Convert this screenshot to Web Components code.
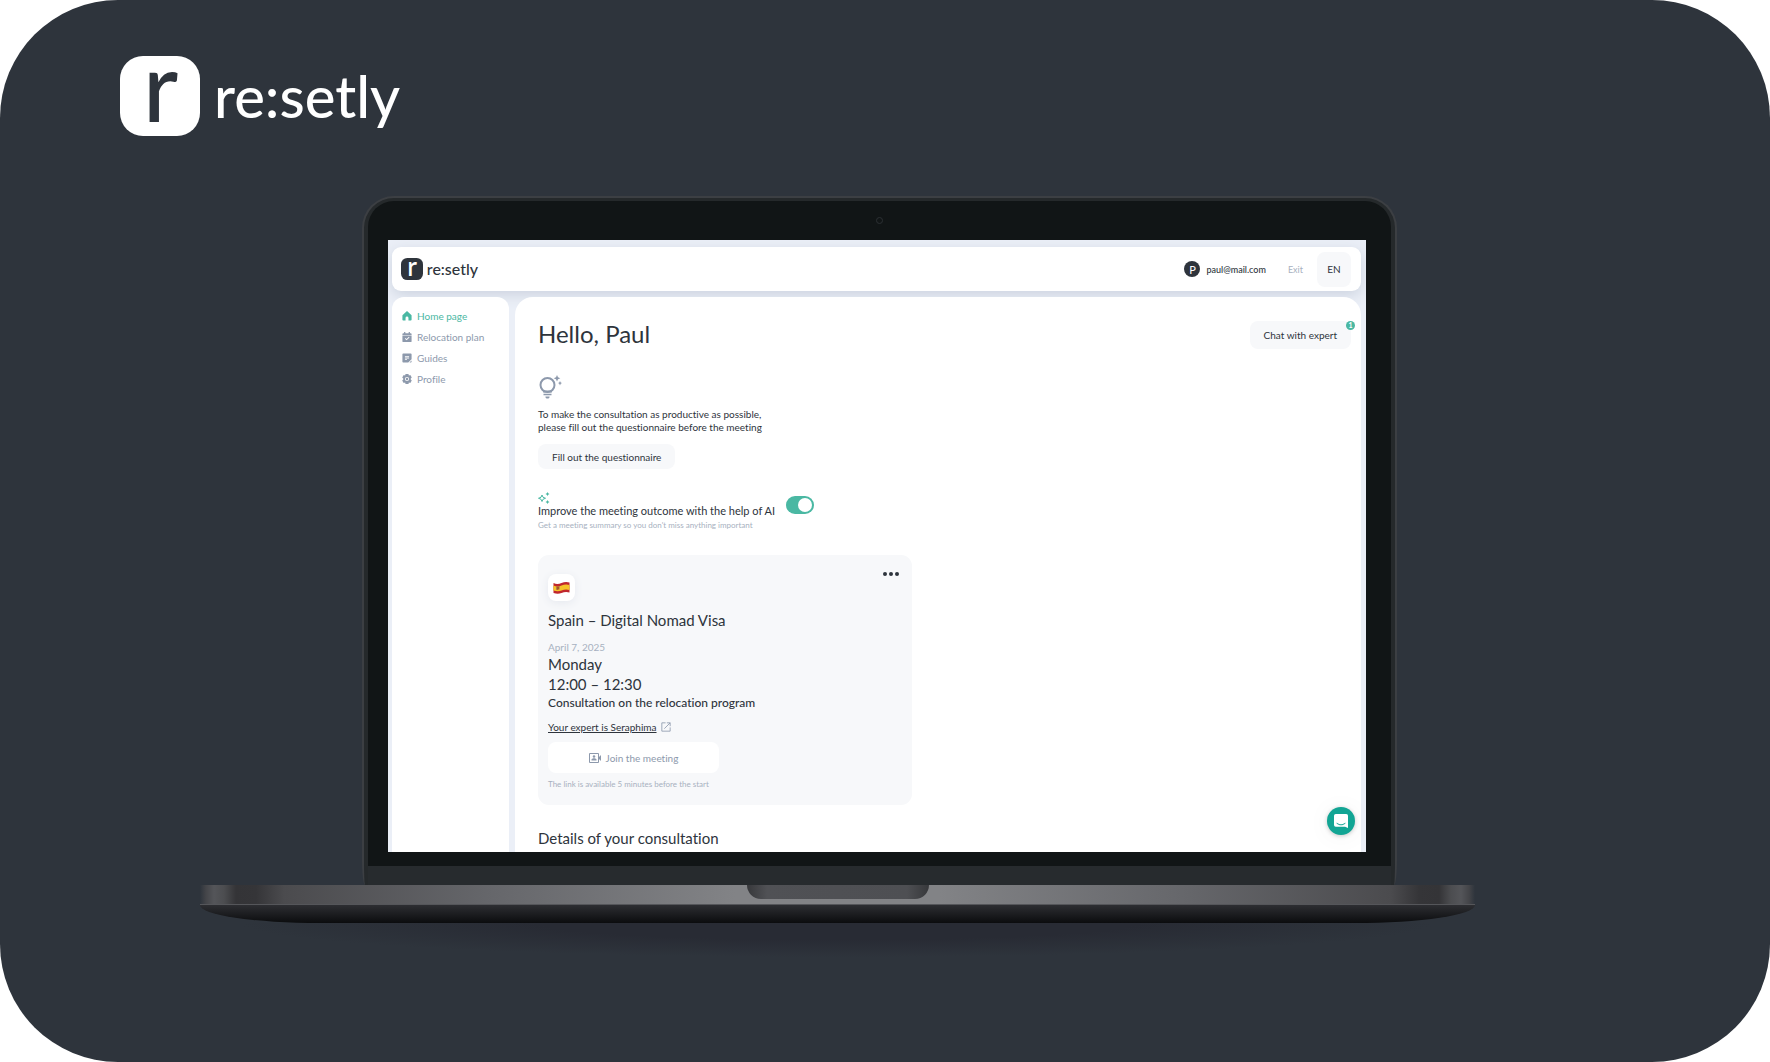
<!DOCTYPE html>
<html lang="en">
<head>
<meta charset="utf-8">
<meta name="viewport" content="width=device-width, initial-scale=1">
<title>re:setly</title>
<style>
  body {
    margin: 0;
    background: #fff;
    color: #2e343c;
    font-family: Lato, "Liberation Sans", sans-serif;
    font-variant-ligatures: none;
  }
</style>
</head>
<body>
<promo-stage>
  <resetly-logo slot="brand"></resetly-logo>
  <laptop-frame>
    <resetly-app></resetly-app>
  </laptop-frame>
</promo-stage>

<script>
//register a component from its css and html
const define = (name, css, html) => {
  customElements.define(name, class extends HTMLElement {
    constructor() {
      super();
      this.attachShadow({ mode: "open" }).innerHTML = `<style>*{box-sizing:border-box}${css}</style>${html}`;
    }
  });
};

//icons, all on a 24 grid
const icons = {
  home: `<path d="M12 0 1 10V21A2 2 0 0 0 3 23H8.500v-6.500a3.500 3.500 0 0 1 7 0V23H21a2 2 0 0 0 2-2V10z"/>`,
  plan: `<path fill-rule="evenodd" d="M5 0h3v3h8V0h3v3h2a2 2 0 0 1 2 2v2H1V5a2 2 0 0 1 2-2h2zM1 8.500h22V22a2 2 0 0 1-2 2H3a2 2 0 0 1-2-2zm7.500 6L7 16l4 4 7-7-1.500-1.500L11 17z"/>`,
  guides: `<path fill-rule="evenodd" d="M3 1h18a2 2 0 0 1 2 2v12l-8 8H3a2 2 0 0 1-2-2V3a2 2 0 0 1 2-2zm4 6v2h10V7zm0 4v2h10v-2zm0 4v2h5v-2z"/><path d="m18 23 5-5v3a2 2 0 0 1-2 2z"/>`,
  profile: `<path fill-rule="evenodd" d="M8.500 0h7l1 3.500 3.500-1 3.500 6L21 11v2l2.500 2.500-3.500 6-3.500-1-1 3.500h-7l-1-3.500-3.500 1-3.500-6L3 13v-2L.5 8.500l3.500-6 3.500 1zM12 7a5 5 0 1 0 0 10 5 5 0 0 0 0-10z"/><circle cx="12" cy="12" r="3"/>`,
  bulb: `<circle cx="9.500" cy="10" r="7" fill="none" stroke="currentColor" stroke-width="2"/><path d="M5 15.500h9v2H5zM5.500 18.700h8v1.500h-8zM7.500 21.500h4v1l-1 1h-2l-1-1zM19 0l1 2.300 2.300 1-2.300 1-1 2.300-1-2.300-2.300-1 2.300-1zM22 6l.7 1.500 1.300.6-1.300.6L22 10.500l-.7-1.800-1.300-.6 1.300-.6z"/>`,
  sparks: `<path fill="none" stroke="currentColor" stroke-width="2" d="m8 6 2 4.500 5 2-5 2L8 19l-2-4.500-5-2 5-2z"/><path d="m19 0 1.300 2.700L23 4l-2.700 1.300L19 8l-1.300-2.700L15 4l2.700-1.300zM19 16l1.300 2.700L23 20l-2.700 1.300L19 24l-1.300-2.700L15 20l2.700-1.300z"/>`,
  external: `<path fill="none" stroke="currentColor" stroke-width="2" d="M11 2H2v20h20v-9M14 2h8v8M22 2 8 16"/>`,
  video: `<path fill="none" stroke="currentColor" stroke-width="2" d="M1 3h18v18H1z"/><circle cx="10" cy="9" r="2.500"/><path d="M5 17v-1.500c0-4 10-4 10 0V17zM20 10l4-4v12l-4-4z"/>`,
  dots: `<circle cx="3" cy="12" r="3"/><circle cx="12" cy="12" r="3"/><circle cx="21" cy="12" r="3"/>`,
  chat: `<path fill-rule="evenodd" d="M3 0h18a3 3 0 0 1 3 3v21l-5-2H3a3 3 0 0 1-3-3V3a3 3 0 0 1 3-3zm1.500 14.500c4 4 11 4 15 0v1.700c-4 4-11 4-15 0z"/>`,
};
customElements.define("app-icon", class extends HTMLElement {
  connectedCallback() {
    if (this.shadowRoot) return;
    this.attachShadow({ mode: "open" }).innerHTML = `
      <style>
        :host { display: inline-flex; flex: none; width: 10px; height: 10px; }
        svg { width: 100%; height: 100%; }
      </style>
      <svg viewBox="0 0 24 24" fill="currentColor" aria-hidden="true">${icons[this.getAttribute("name")]}</svg>`;
  }
});

//brand mark and wordmark, scaled with --logo-height
define("resetly-logo", `
  :host { display: block; height: var(--logo-height, 80px); color: var(--logo-color, #fff); }
  svg { display: block; height: 100%; overflow: visible; }
`, `
  <svg viewBox="0 0 284 80">
    <rect width="80" height="80" rx="23" fill="currentColor"/>
    <text x="23" y="66" font-size="96" font-weight="500" fill="var(--logo-letter, #2e343c)">r</text>
    <text x="94" y="62" font-size="58" font-weight="500" fill="currentColor">re:setly</text>
  </svg>
`);

define("promo-stage", `
  :host {
    display: flex;
    flex-direction: column;
    gap: 60px;
    min-height: 100vh;
    box-sizing: border-box;
    padding: 56px 295px 56px 200px;
    border-radius: 118px;
    background: #2e343c;
  }
  header { margin-left: -80px; }
`, `
  <header><slot name="brand"></slot></header>
  <slot></slot>
`);

define("laptop-frame", `
  :host { display: block; }
  .lid {
    margin: 0 78px 0 162px;
    padding: 3px 4px 0;
    border: 2px solid #3c3f43;
    border-bottom: 0;
    border-radius: 32px 32px 3px 3px / 32px 32px 26px 26px;
    background: #25292b;
  }
  .bezel {
    padding-bottom: 14px;
    border-radius: 26px 26px 0 0;
    background: #111516;
  }
  .camera { display: flex; justify-content: center; align-items: center; height: 39px; }
  .camera i { width: 7px; height: 7px; border: 1px solid #2c3033; border-radius: 50%; }
  .screen { overflow: hidden; margin: 0 25px 0 20px; }
  .chin { height: 19px; background: #272b2e; }
  .deck {
    display: flex;
    justify-content: center;
    height: 20px;
    border-bottom: 1px solid #55565a;
    background: linear-gradient(90deg, #2e343c, #444549 6px, #545559 14px, #4c4d50 24px, #343437 36px, #353538 56px, #4b4b4e 84px, #66676b 23%, #828386 42%, #828386 58%, #66676b 77%, #4b4b4e calc(100% - 84px), #353538 calc(100% - 56px), #343437 calc(100% - 36px), #4c4d50 calc(100% - 24px), #545559 calc(100% - 14px), #444549 calc(100% - 6px), #2e343c);
  }
  .notch {
    width: 182px;
    height: 14px;
    border-radius: 0 0 14px 14px;
    background: linear-gradient(90deg, #37383b, #505155 20px, #4e4f53 160px, #37383b);
  }
  .foot {
    height: 18px;
    border-radius: 0 0 120px 120px / 0 0 18px 18px;
    background: linear-gradient(#2d2e32, #0b0c0e);
  }
  .shadow { height: 34px; margin: 0 40px; background: radial-gradient(farthest-side at 50% 0, #282b34 50%, #2e343c); }
`, `
  <div class="lid">
    <div class="bezel">
      <div class="camera"><i></i></div>
      <div class="screen"><slot></slot></div>
    </div>
    <div class="chin"></div>
  </div>
  <div class="deck"><div class="notch"></div></div>
  <div class="foot"></div>
  <div class="shadow"></div>
`);

define("soft-button", `
  :host { display: inline-flex; position: relative; }
  button {
    display: flex;
    justify-content: center;
    align-items: center;
    gap: 5px;
    width: 100%;
    height: var(--button-height, 28px);
    padding: 0 14px;
    border: 0;
    border-radius: 8px;
    background: var(--button-bg, #f7f8fa);
    color: inherit;
    font: inherit;
    white-space: nowrap;
  }
`, `<button type="button"><slot></slot></button><slot name="badge"></slot>`);

define("app-header", `
  :host {
    display: flex;
    align-items: center;
    height: 44px;
    box-sizing: border-box;
    padding: 0 10px 0 9px;
    border-radius: 9px;
    background: #fff;
    box-shadow: 0 4px 14px #ccd3df;
  }
  resetly-logo { --logo-height: 22px; --logo-color: #2e343c; --logo-letter: #fff; margin-right: auto; }
  .avatar {
    display: grid;
    place-items: center;
    width: 16px;
    height: 16px;
    margin-right: 6px;
    border-radius: 50%;
    background: #2e343c;
    color: #fff;
    font-size: 11px;
  }
  .mail { font-size: 9px; font-weight: 500; }
  .exit { margin: 0 14px 0 22px; color: #a7b1c0; font-size: 9px; text-decoration: none; }
  soft-button { --button-height: 35px; width: 34px; font-size: 10px; }
`, `
  <resetly-logo></resetly-logo>
  <span class="avatar">P</span>
  <span class="mail">paul@mail.com</span>
  <a class="exit" href="#exit">Exit</a>
  <soft-button>EN</soft-button>
`);

define("nav-item", `
  :host { display: block; }
  a { display: flex; align-items: center; gap: 5px; height: 21px; color: #8d99ac; font-size: 10px; text-decoration: none; white-space: nowrap; }
  :host([active]) a { color: #4ab8a3; }
`, `<a href="#"><slot name="icon"></slot><slot></slot></a>`);

define("side-nav", `
  :host { display: block; box-sizing: border-box; padding: 8px 10px; border-radius: 12px 12px 0 0; background: #fff; }
`, `
  <nav>
    <nav-item active><app-icon slot="icon" name="home"></app-icon>Home page</nav-item>
    <nav-item><app-icon slot="icon" name="plan"></app-icon>Relocation plan</nav-item>
    <nav-item><app-icon slot="icon" name="guides"></app-icon>Guides</nav-item>
    <nav-item><app-icon slot="icon" name="profile"></app-icon>Profile</nav-item>
  </nav>
`);

define("ai-switch", `
  :host { display: flex; align-items: flex-start; gap: 11px; }
  app-icon { display: flex; width: 12px; height: 12px; color: #4ab8a3; }
  label { display: block; font-size: 11px; line-height: 14px; }
  p { margin: 0; color: #a7b1c0; font-size: 8px; line-height: 14px; }
  input {
    display: flex;
    appearance: none;
    width: 28px;
    height: 18px;
    margin: 4px 0 0;
    padding: 2px;
    border-radius: 9px;
    background: #a7b1c0;
  }
  input:checked { justify-content: flex-end; background: #4ab8a3; }
  input::before { content: ""; width: 14px; height: 14px; border-radius: 50%; background: #fff; }
`, `
  <div>
    <app-icon name="sparks"></app-icon>
    <label for="ai">Improve the meeting outcome with the help of AI</label>
    <p>Get a meeting summary so you don't miss anything important</p>
  </div>
  <input id="ai" type="checkbox" role="switch" checked>
`);

define("meeting-card", `
  :host {
    display: block;
    box-sizing: border-box;
    max-width: 374px;
    padding: 19px 10px 14px;
    border-radius: 11px;
    background: #f7f8fa;
  }
  .top { display: flex; justify-content: space-between; align-items: flex-start; }
  .flag {
    display: grid;
    place-items: center;
    width: 27px;
    height: 27px;
    border-radius: 8px;
    background: #fff;
    box-shadow: 0 2px 8px #e6e9ef;
  }
  .flag svg { width: 17px; height: 13px; }
  .more { display: flex; margin: -8px 3px 0 0; padding: 0; border: 0; background: none; color: #2e343c; }
  .more app-icon { width: 16px; height: 16px; }
  h2, p { margin: 0; }
  h2 { margin: 9px 0 10px; font-size: 15px; font-weight: 400; line-height: 20px; }
  .date { color: #a7b1c0; font-size: 10px; line-height: 14px; }
  .when { font-size: 15px; line-height: 20px; }
  .about { font-size: 12px; font-weight: 500; line-height: 17px; }
  .expert { display: flex; align-items: center; gap: 4px; margin: 9px 0 8px; color: #8d99ac; font-size: 10px; line-height: 14px; }
  .expert a { color: #2e343c; }
  soft-button { --button-height: 31px; --button-bg: #fff; display: flex; width: 171px; color: #8d99ac; font-size: 10px; }
  soft-button app-icon { width: 12px; height: 12px; }
  .hint { margin-top: 4px; color: #a7b1c0; font-size: 8px; line-height: 14px; }
`, `
  <div class="top">
    <span class="flag">
      <svg viewBox="0 0 34 26" role="img" aria-label="Spain">
        <path d="M1 4c6 3 11 2 16 0s10-3 16-1v20c-6-2-11-1-16 1S7 26 1 24z" fill="#c0272d"/>
        <path d="M1 9c6 3 11 2 16 0s10-3 16-1v10c-6-2-11-1-16 1S7 21 1 19z" fill="#f6c327"/>
        <path d="M7 11h5v5l-2 2-3-1z" fill="#a8552b"/>
        <path d="M6 11h1v7H6zM12 10h1v7h-1z" fill="#8e7a5a"/>
      </svg>
    </span>
    <button class="more" type="button" aria-label="More"><app-icon name="dots"></app-icon></button>
  </div>
  <h2>Spain – Digital Nomad Visa</h2>
  <p class="date">April 7, 2025</p>
  <p class="when">Monday</p>
  <p class="when">12:00 – 12:30</p>
  <p class="about">Consultation on the relocation program</p>
  <p class="expert"><a href="#expert">Your expert is Seraphima</a><app-icon name="external"></app-icon></p>
  <soft-button><app-icon name="video"></app-icon>Join the meeting</soft-button>
  <p class="hint">The link is available 5 minutes before the start</p>
`);

define("chat-launcher", `
  button {
    display: grid;
    place-items: center;
    width: 28px;
    height: 28px;
    padding: 0;
    border: 0;
    border-radius: 50%;
    background: #12a594;
    color: #fff;
    box-shadow: 0 1px 4px #0003, 0 2px 24px #0000000d;
  }
  app-icon { width: 14px; height: 14px; }
`, `<button type="button" aria-label="Open chat"><app-icon name="chat"></app-icon></button>`);

define("home-page", `
  :host { display: block; box-sizing: border-box; padding: 24px 10px 4px 23px; border-radius: 18px 18px 0 0; background: #fff; }
  .head { display: flex; justify-content: space-between; height: 28px; }
  h1 { margin: 0; font-size: 24px; font-weight: 400; line-height: 26px; }
  h2 { margin: 23px 0 0; font-size: 15px; font-weight: 400; line-height: 20px; }
  .head soft-button { font-size: 10px; }
  .badge {
    position: absolute;
    top: 0;
    right: -4px;
    width: 9px;
    height: 9px;
    border-radius: 50%;
    background: #4ab8a3;
    color: #fff;
    font-size: 7px;
    font-weight: 700;
    line-height: 9px;
    text-align: center;
  }
  .bulb { display: flex; width: 24px; height: 24px; margin-top: 26px; color: #8d99ac; }
  p { margin: 9px 0 10px; font-size: 10px; line-height: 13px; }
  .fill { --button-height: 25px; font-size: 10px; }
  ai-switch { margin: 23px 0; }
`, `
  <div class="head">
    <h1>Hello, Paul</h1>
    <soft-button>Chat with expert<span class="badge" slot="badge">1</span></soft-button>
  </div>
  <app-icon class="bulb" name="bulb"></app-icon>
  <p>To make the consultation as productive as possible,<br>please fill out the questionnaire before the meeting</p>
  <soft-button class="fill">Fill out the questionnaire</soft-button>
  <ai-switch></ai-switch>
  <meeting-card></meeting-card>
  <h2>Details of your consultation</h2>
`);

define("resetly-app", `
  :host { display: block; position: relative; padding: 7px 5px 0 4px; background: #ebeff7; }
  .body { display: grid; grid-template-columns: 117px 1fr; gap: 6px; position: relative; margin-top: 6px; }
  chat-launcher { position: absolute; right: 11px; bottom: 17px; }
`, `
  <app-header></app-header>
  <div class="body">
    <side-nav></side-nav>
    <home-page></home-page>
  </div>
  <chat-launcher></chat-launcher>
`);
</script>
</body>
</html>
